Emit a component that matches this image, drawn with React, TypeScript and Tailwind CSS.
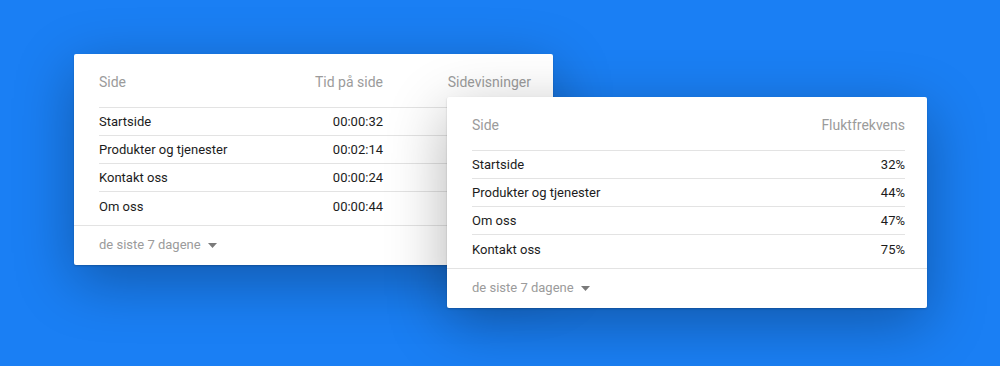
import React from "react";

type Row = { name: string; values: string[] };

function Caret() {
  return (
    <svg width="9" height="5" viewBox="0 0 9 5" className="ml-[7px] mt-[1px]">
      <path d="M0 0 L9 0 L4.5 5 Z" fill="#7a7a7a" />
    </svg>
  );
}

function Card({
  headers,
  rows,
  colClasses,
  className,
}: {
  headers: string[];
  rows: Row[];
  colClasses: string[];
  className: string;
}) {
  return (
    <div
      className={
        "bg-white rounded-[2px] h-[211px] flex flex-col shadow-[0_1px_2px_rgba(0,0,0,0.2),0_16px_60px_rgba(0,0,0,0.3)] " +
        className
      }
    >
      <div className="pl-[25px] pr-[22px]">
        <div className="flex pt-[20px] pb-[17px] border-b border-[#e3e3e3] text-[14px] leading-[16px] text-[#9b9b9b]">
          <div className="flex-1">{headers[0]}</div>
          {headers.slice(1).map((h, i) => (
            <div key={h} className={colClasses[i]}>
              {h}
            </div>
          ))}
        </div>
        <div className="mb-[5px]">
          {rows.map((r, ri) => (
            <div
              key={r.name}
              className={
                "flex items-center h-[28px] pt-[1px] text-[13px] text-[#1c1c1c] " +
                (ri < rows.length - 1 ? "border-b border-[#e3e3e3]" : "")
              }
            >
              <div className="flex-1">{r.name}</div>
              {r.values.map((v, i) => (
                <div key={i} className={colClasses[i]}>
                  {v}
                </div>
              ))}
            </div>
          ))}
        </div>
      </div>
      <div className="border-t border-[#e3e3e3] flex-1 pl-[25px] pt-[11px]">
        <div className="flex items-center text-[13px] leading-[16px] text-[#9b9b9b]">
          <span>de siste 7 dagene</span>
          <Caret />
        </div>
      </div>
    </div>
  );
}

export default function App() {
  return (
    <div
      className="w-[1000px] h-[366px] bg-[#1a7ff4] overflow-hidden"
      style={{ fontFamily: "Roboto, 'Noto Sans', sans-serif" }}
    >
      <div className="grid pt-[54px] pl-[74px]">
        <Card
          className="col-start-1 row-start-1 w-[479px]"
          headers={["Side", "Tid på side", "Sidevisninger"]}
          colClasses={["text-right", "w-[148px] text-right"]}
          rows={[
            { name: "Startside", values: ["00:00:32", "1 204"] },
            { name: "Produkter og tjenester", values: ["00:02:14", "864"] },
            { name: "Kontakt oss", values: ["00:00:24", "512"] },
            { name: "Om oss", values: ["00:00:44", "389"] },
          ]}
        />
        <Card
          className="col-start-1 row-start-1 w-[480px] ml-[373px] mt-[43px]"
          headers={["Side", "Fluktfrekvens"]}
          colClasses={["text-right"]}
          rows={[
            { name: "Startside", values: ["32%"] },
            { name: "Produkter og tjenester", values: ["44%"] },
            { name: "Om oss", values: ["47%"] },
            { name: "Kontakt oss", values: ["75%"] },
          ]}
        />
      </div>
    </div>
  );
}
